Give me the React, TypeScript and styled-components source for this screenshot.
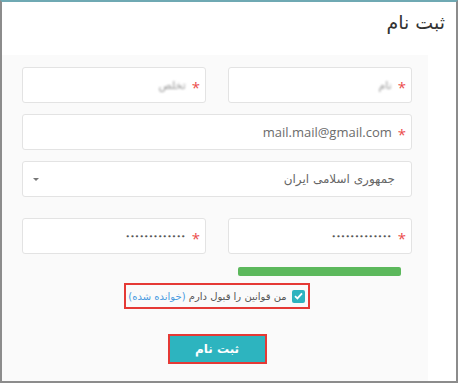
import styled, { createGlobalStyle } from "styled-components";

const Global = createGlobalStyle`
  html, body { margin: 0; padding: 0; background: #fff; }
  body { font-family: "Open Sans", "DejaVu Sans", sans-serif; }
  * { box-sizing: border-box; }
`;

const Frame = styled.div`
  width: 458px;
  height: 383px;
  border: 2px solid #8c8c8c;
  border-top: 2px solid #6fa9b3;
  background: #fff;
  direction: rtl;
  display: flex;
  flex-direction: column;
  overflow: hidden;
`;

const Header = styled.div`
  height: 53px;
  padding: 9px 11px 0 0;
`;

const Title = styled.h1`
  margin: 0;
  font-family: "DejaVu Sans", sans-serif;
  font-weight: normal;
  font-size: 19px;
  color: #333;
`;

const Panel = styled.div`
  flex: 1;
  margin-right: 28px;
  background: #fafafa;
  padding: 12px 16px 0 20px;
  display: flex;
  flex-direction: column;
`;

const Grid = styled.div<{ $gap?: number }>`
  display: grid;
  grid-template-columns: 1fr 1fr;
  column-gap: 22px;
  margin-bottom: ${(p) => p.$gap ?? 11}px;
`;

const Field = styled.div<{ $wide?: boolean }>`
  grid-column: ${(p) => (p.$wide ? "1 / span 2" : "auto")};
  height: 36px;
  background: #fff;
  border: 1px solid #e3e3e3;
  border-radius: 3px;
  display: flex;
  align-items: center;
  padding: 0 5px 0 10px;
  gap: 6px;
  color: #6b6b6b;
  font-size: 13px;
`;

const Star = styled.span`
  color: #ec4c4c;
  font-size: 15px;
  margin-top: 4px;
`;

const Blurred = styled.span`
  color: #999;
  font-family: "DejaVu Sans", sans-serif;
  font-size: 11px;
  filter: blur(1.3px);
`;

const Ltr = styled.span`
  direction: ltr;
  color: #6b6b6b;
`;

const Dots = styled.span`
  direction: ltr;
  color: #555;
  font-family: "DejaVu Sans", sans-serif;
  font-size: 7.5px;
  letter-spacing: 0.2px;
`;

const SelectText = styled.span`
  font-family: "DejaVu Sans", sans-serif;
  font-size: 12px;
  color: #666;
  padding-right: 11px;
  flex: 1;
`;

const Caret = styled.span`
  width: 0;
  height: 0;
  border-left: 3px solid transparent;
  border-right: 3px solid transparent;
  border-top: 3px solid #777;
`;

const Meter = styled.div`
  height: 9px;
  margin: 0 11px 0 10px;
  background: #5cb85c;
  border-radius: 2px;
`;

const Center = styled.div<{ $top: number }>`
  display: flex;
  justify-content: center;
  margin-top: ${(p) => p.$top}px;
`;

const Terms = styled.label`
  display: flex;
  align-items: center;
  gap: 5px;
  height: 26px;
  padding: 0 3px 0 2px;
  border: 2px solid #e53935;
  font-family: "DejaVu Sans", sans-serif;
  font-size: 10px;
  color: #555;
`;

const Box = styled.span`
  width: 13px;
  height: 13px;
  background: #2fb3bf;
  border-radius: 2px;
  display: flex;
  align-items: center;
  justify-content: center;
`;

const Link = styled.span`
  color: #4a9be0;
`;

const Button = styled.button`
  width: 99px;
  height: 30px;
  border: 2px solid #e53935;
  background: #2db4bf;
  color: #fff;
  font-family: "DejaVu Sans", sans-serif;
  font-weight: bold;
  font-size: 12px;
  padding: 0;
`;

export default function App() {
  return (
    <>
      <Global />
      <Frame>
        <Header>
          <Title>ثبت نام</Title>
        </Header>
        <Panel>
          <Grid>
            <Field>
              <Star>*</Star>
              <Blurred>نام</Blurred>
            </Field>
            <Field>
              <Star>*</Star>
              <Blurred>تخلص</Blurred>
            </Field>
          </Grid>
          <Grid>
            <Field $wide>
              <Star>*</Star>
              <Ltr>mail.mail@gmail.com</Ltr>
            </Field>
          </Grid>
          <Grid $gap={21}>
            <Field $wide>
              <SelectText>جمهوری اسلامی ایران</SelectText>
              <Caret />
            </Field>
          </Grid>
          <Grid $gap={13}>
            <Field>
              <Star>*</Star>
              <Dots>•••••••••••••</Dots>
            </Field>
            <Field>
              <Star>*</Star>
              <Dots>•••••••••••••</Dots>
            </Field>
          </Grid>
          <Grid $gap={0}>
            <Meter />
          </Grid>
          <Center $top={7}>
            <Terms>
              <Box>
                <svg width="9" height="8" viewBox="0 0 9 8">
                  <path d="M1 4.2 L3.4 6.4 L8 1.4" stroke="#fff" strokeWidth="1.8" fill="none" />
                </svg>
              </Box>
              <span>
                من قوانین را قبول دارم <Link>(خوانده شده)</Link>
              </span>
            </Terms>
          </Center>
          <Center $top={25}>
            <Button>ثبت نام</Button>
          </Center>
        </Panel>
      </Frame>
    </>
  );
}
